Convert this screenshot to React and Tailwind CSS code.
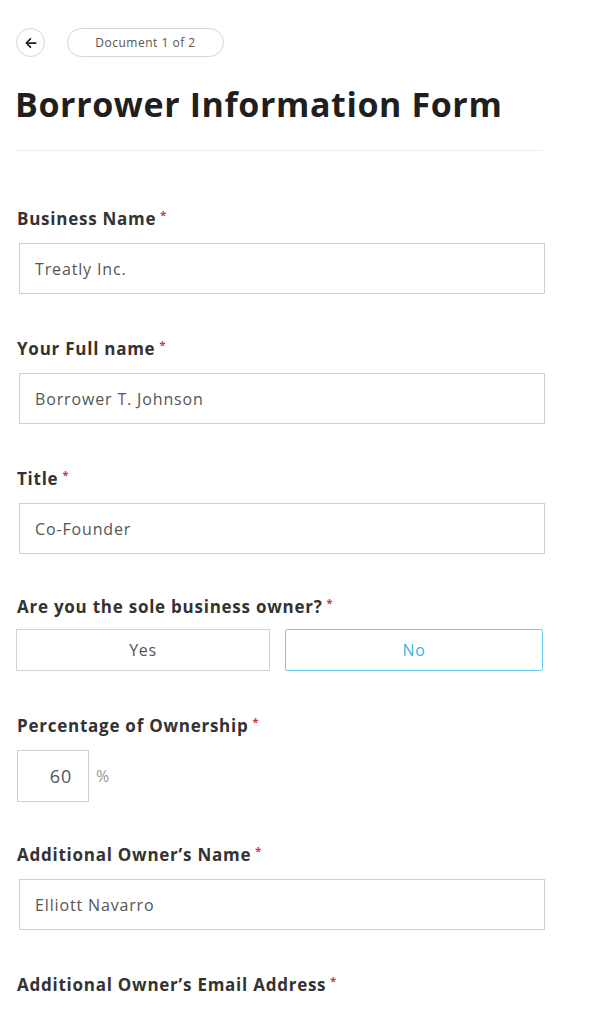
import React from "react";

const font = { fontFamily: "'Open Sans', Lato, sans-serif" };

function Label({ children }) {
  return (
    <div className="flex items-start text-[17px] font-bold text-[#333] leading-[22px] tracking-[0.75px]">
      <span>{children}</span>
      <span className="text-[#d0343a] text-[11px] leading-[14px] ml-[4px]">*</span>
    </div>
  );
}

function TextInput({ value }) {
  return (
    <div className="mt-[13px] h-[51px] w-[526px] ml-[2px] border border-[#cfcfcf] flex items-center pl-[15px] text-[16px] tracking-[0.85px] text-[#555]">
      {value}
    </div>
  );
}

export default function App() {
  return (
    <div className="w-[592px] h-[1024px] bg-white overflow-hidden" style={font}>
      <div className="flex items-center pt-[28px] pl-[16px]">
        <div className="w-[29px] h-[29px] rounded-full border border-[#d6d6d6] flex items-center justify-center">
          <svg width="14" height="14" viewBox="0 0 24 24" fill="none" stroke="#222" strokeWidth="3" strokeLinecap="round" strokeLinejoin="round">
            <path d="M20 12H5" />
            <path d="M11 5l-7 7 7 7" />
          </svg>
        </div>
        <div className="ml-[22px] w-[157px] h-[29px] rounded-full border border-[#d6d6d6] flex items-center justify-center text-[12px] tracking-[0.5px] text-[#555]">
          Document 1 of 2
        </div>
      </div>
      <h1 className="ml-[15px] mt-[25px] text-[34px] leading-[44px] font-bold text-[#1f1f1f] tracking-[0.6px]">
        Borrower Information Form
      </h1>
      <div className="ml-[14px] mt-[24px] w-[529px] h-px bg-[#efeee9]" />

      <div className="pl-[17px] pt-[57px]">
        <Label>Business Name</Label>
        <TextInput value="Treatly Inc." />

        <div className="mt-[44px]">
          <Label>Your Full name</Label>
          <TextInput value="Borrower T. Johnson" />
        </div>

        <div className="mt-[44px]">
          <Label>Title</Label>
          <TextInput value="Co-Founder" />
        </div>

        <div className="mt-[42px]">
          <Label>Are you the sole business owner?</Label>
          <div className="mt-[11px] flex -ml-[1px]">
            <div className="w-[254px] h-[42px] border border-[#d2d2d2] flex items-center justify-center text-[16px] tracking-[0.6px] text-[#555]">
              Yes
            </div>
            <div className="ml-[15px] w-[258px] h-[42px] border border-[#6fcdef] rounded-[2px] flex items-center justify-center text-[16px] tracking-[0.6px] text-[#3cb4e4]">
              No
            </div>
          </div>
        </div>

        <div className="mt-[44px]">
          <Label>Percentage of Ownership</Label>
          <div className="mt-[13px] flex items-center">
            <div className="w-[72px] h-[52px] border border-[#cfcfcf] flex items-center justify-end pr-[16px] text-[18px] tracking-[0.8px] text-[#555]">
              60
            </div>
            <span className="ml-[7px] text-[16px] tracking-[0.5px] text-[#999]">%</span>
          </div>
        </div>

        <div className="mt-[42px]">
          <Label>Additional Owner’s Name</Label>
          <TextInput value="Elliott Navarro" />
        </div>

        <div className="mt-[44px]">
          <Label>Additional Owner’s Email Address</Label>
        </div>
      </div>
    </div>
  );
}
